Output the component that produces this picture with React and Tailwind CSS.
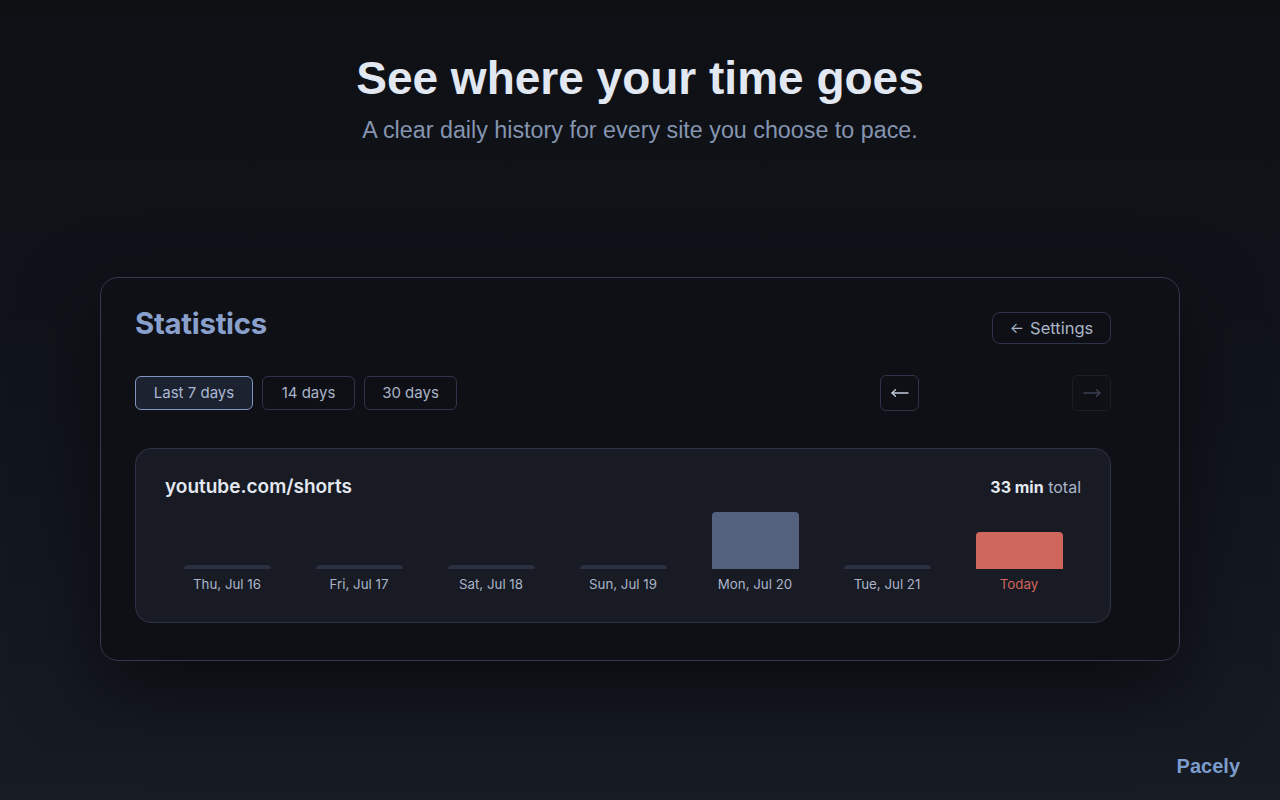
import React, { useState } from 'react';

const days = [
  { label: 'Thu, Jul 16', mins: 0 },
  { label: 'Fri, Jul 17', mins: 0 },
  { label: 'Sat, Jul 18', mins: 0 },
  { label: 'Sun, Jul 19', mins: 0 },
  { label: 'Mon, Jul 20', mins: 20 },
  { label: 'Tue, Jul 21', mins: 0 },
  { label: 'Today', mins: 13, today: true },
];

const maxMins = 20;
const chartHeight = 57;

// long thin arrow, like the one in the pager buttons
const LongArrow = ({ dir = 'left' }) => (
  <svg width="18" height="10" viewBox="0 0 18 10" fill="none" stroke="currentColor" strokeWidth="1.3" strokeLinecap="round" strokeLinejoin="round">
    {dir === 'left' ? (
      <>
        <path d="M1 5h16" />
        <path d="M4.5 1.8 1 5l3.5 3.2" />
      </>
    ) : (
      <>
        <path d="M1 5h16" />
        <path d="M13.5 1.8 17 5l-3.5 3.2" />
      </>
    )}
  </svg>
);

const App = () => {
  const [range, setRange] = useState(7);

  return (
    <div className="flex h-[800px] flex-col items-center bg-gradient-to-b from-[#0e1014] via-[#10141b] to-[#171b24] font-['Inter',sans-serif]">
      <h1 className="mt-[50px] font-['Liberation_Sans',Arial,sans-serif] text-[46px] font-bold leading-[56px] text-[#e2e8f2]">
        See where your time goes
      </h1>
      <p className="mt-[10px] font-['Liberation_Sans',Arial,sans-serif] text-[23.3px] leading-[28px] text-[#8594b0]">
        A clear daily history for every site you choose to pace.
      </p>

      <div className="mt-[133px] w-[1080px] rounded-[18px] border border-[#323950] bg-[#0e1016] px-[34px] pt-[28px] pb-[37px] shadow-[0_30px_80px_rgba(0,0,0,0.55)]">
        <div className="w-[976px]">
          <div className="flex items-start justify-between">
            <h2 className="text-[29.4px] font-bold leading-9 tracking-[-0.01em] text-[#8aa0cc]">Statistics</h2>
            <button type="button" className="mt-[6px] flex h-[32px] w-[119px] items-center justify-center gap-1.5 rounded-lg border border-[#2f3548] text-[16.5px] text-[#aab4c8]">
              <span className="text-[15px]">←</span> Settings
            </button>
          </div>

          <div className="mt-[31px] flex items-center justify-between">
            <div className="flex gap-[9px]">
              {[
                { days: 7, label: 'Last 7 days', w: 'w-[118px]' },
                { days: 14, label: '14 days', w: 'w-[93px]' },
                { days: 30, label: '30 days', w: 'w-[93px]' },
              ].map((tab) => (
                <button
                  key={tab.days}
                  type="button"
                  onClick={() => setRange(tab.days)}
                  className={`h-[34px] ${tab.w} rounded-md border text-[15px] ${range === tab.days ? 'border-[#7f95c0] bg-[#1c2230] text-[#aab8d4]' : 'border-[#2f3548] bg-transparent text-[#aab4c8]'}`}
                >
                  {tab.label}
                </button>
              ))}
            </div>
            <div className="flex items-center">
              <button type="button" className="flex h-[36px] w-[39px] items-center justify-center rounded-md border border-[#2f3548] text-[#c4ccdb]">
                <LongArrow dir="left" />
              </button>
              <div className="w-[153px]" />
              <button type="button" disabled className="flex h-[36px] w-[39px] items-center justify-center rounded-md border border-[#1a1e29] text-[#3a4050]">
                <LongArrow dir="right" />
              </button>
            </div>
          </div>

          <div className="mt-[37px] rounded-[16px] border border-[#2d3346] bg-[#181b24] px-[29px] pt-[24px] pb-[29px]">
            <div className="flex items-center justify-between">
              <div className="text-[19px] font-semibold leading-7 text-[#e4e8f0]">youtube.com/shorts</div>
              <div className="text-[16px] text-[#aab4c8]">
                <span className="font-bold text-[#e4e8f0]">33 min</span> total
              </div>
            </div>
            <div className="mt-[4px] grid grid-cols-7 gap-2">
              {days.map((day) => {
                const h = day.mins ? Math.round((day.mins / maxMins) * chartHeight) : 4;
                return (
                  <div key={day.label} className="flex flex-col items-center">
                    <div className="flex h-[64px] w-full items-end justify-center">
                      <div
                        className={`w-[87px] rounded-t ${day.today ? 'bg-[#cf675c]' : day.mins ? 'bg-[#53617f]' : 'bg-[#2b3142]'}`}
                        style={{ height: h }}
                      />
                    </div>
                    <div className={`mt-[6px] text-[13.3px] leading-[18px] ${day.today ? 'text-[#d0665c]' : 'text-[#aab4c8]'}`}>{day.label}</div>
                  </div>
                );
              })}
            </div>
          </div>
        </div>
      </div>

      <div className="mt-auto mb-[19px] flex w-full justify-end pr-[40px]">
        <span className="font-['Liberation_Sans',Arial,sans-serif] text-[20px] font-bold text-[#7b9ccc]">Pacely</span>
      </div>
    </div>
  );
};

export default App;
